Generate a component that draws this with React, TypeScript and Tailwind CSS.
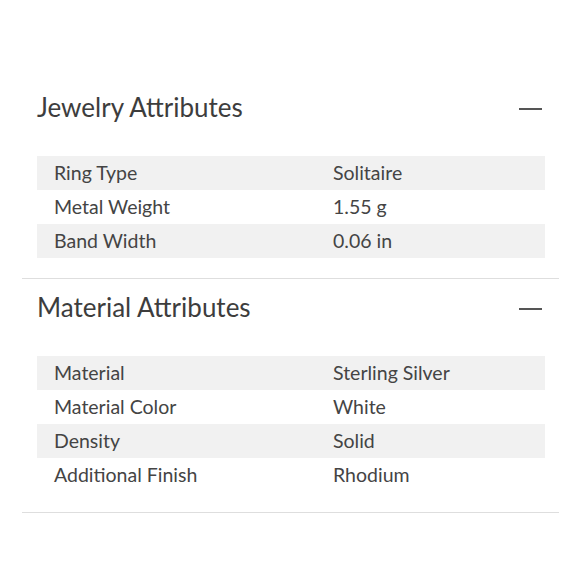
import React from "react";

type Row = [string, string];

const sections: { title: string; rows: Row[] }[] = [
  {
    title: "Jewelry Attributes",
    rows: [
      ["Ring Type", "Solitaire"],
      ["Metal Weight", "1.55 g"],
      ["Band Width", "0.06 in"],
    ],
  },
  {
    title: "Material Attributes",
    rows: [
      ["Material", "Sterling Silver"],
      ["Material Color", "White"],
      ["Density", "Solid"],
      ["Additional Finish", "Rhodium"],
    ],
  },
];

export default function App() {
  return (
    <div
      className="w-[580px] h-[580px] bg-white pt-[91px] pl-[22px] pr-[21px] text-[#444444]"
      style={{ fontFamily: "Lato, 'Open Sans', sans-serif" }}
    >
      {sections.map((s) => (
        <section key={s.title} className="border-b border-[#dedede] pt-[12px] first:pt-0 pb-[20px]">
          <div className="pl-[15px] pr-[14px]">
            <div className="flex items-center justify-between">
              <h2 className="text-[26px] leading-[32px] font-normal text-[#3d3d3d]">{s.title}</h2>
              <div className="w-[23px] h-[2px] bg-[#555555] mr-[3px] mt-[4px]" />
            </div>
            <div className="mt-[33px]">
              {s.rows.map(([k, v], i) => (
                <div
                  key={k}
                  className={`flex h-[34px] items-center text-[19.5px] leading-[34px] ${i % 2 === 0 ? "bg-[#f1f1f1]" : "bg-white"}`}
                >
                  <div className="w-[279px] pl-[17px]">{k}</div>
                  <div className="pl-[17px]">{v}</div>
                </div>
              ))}
            </div>
          </div>
        </section>
      ))}
    </div>
  );
}
